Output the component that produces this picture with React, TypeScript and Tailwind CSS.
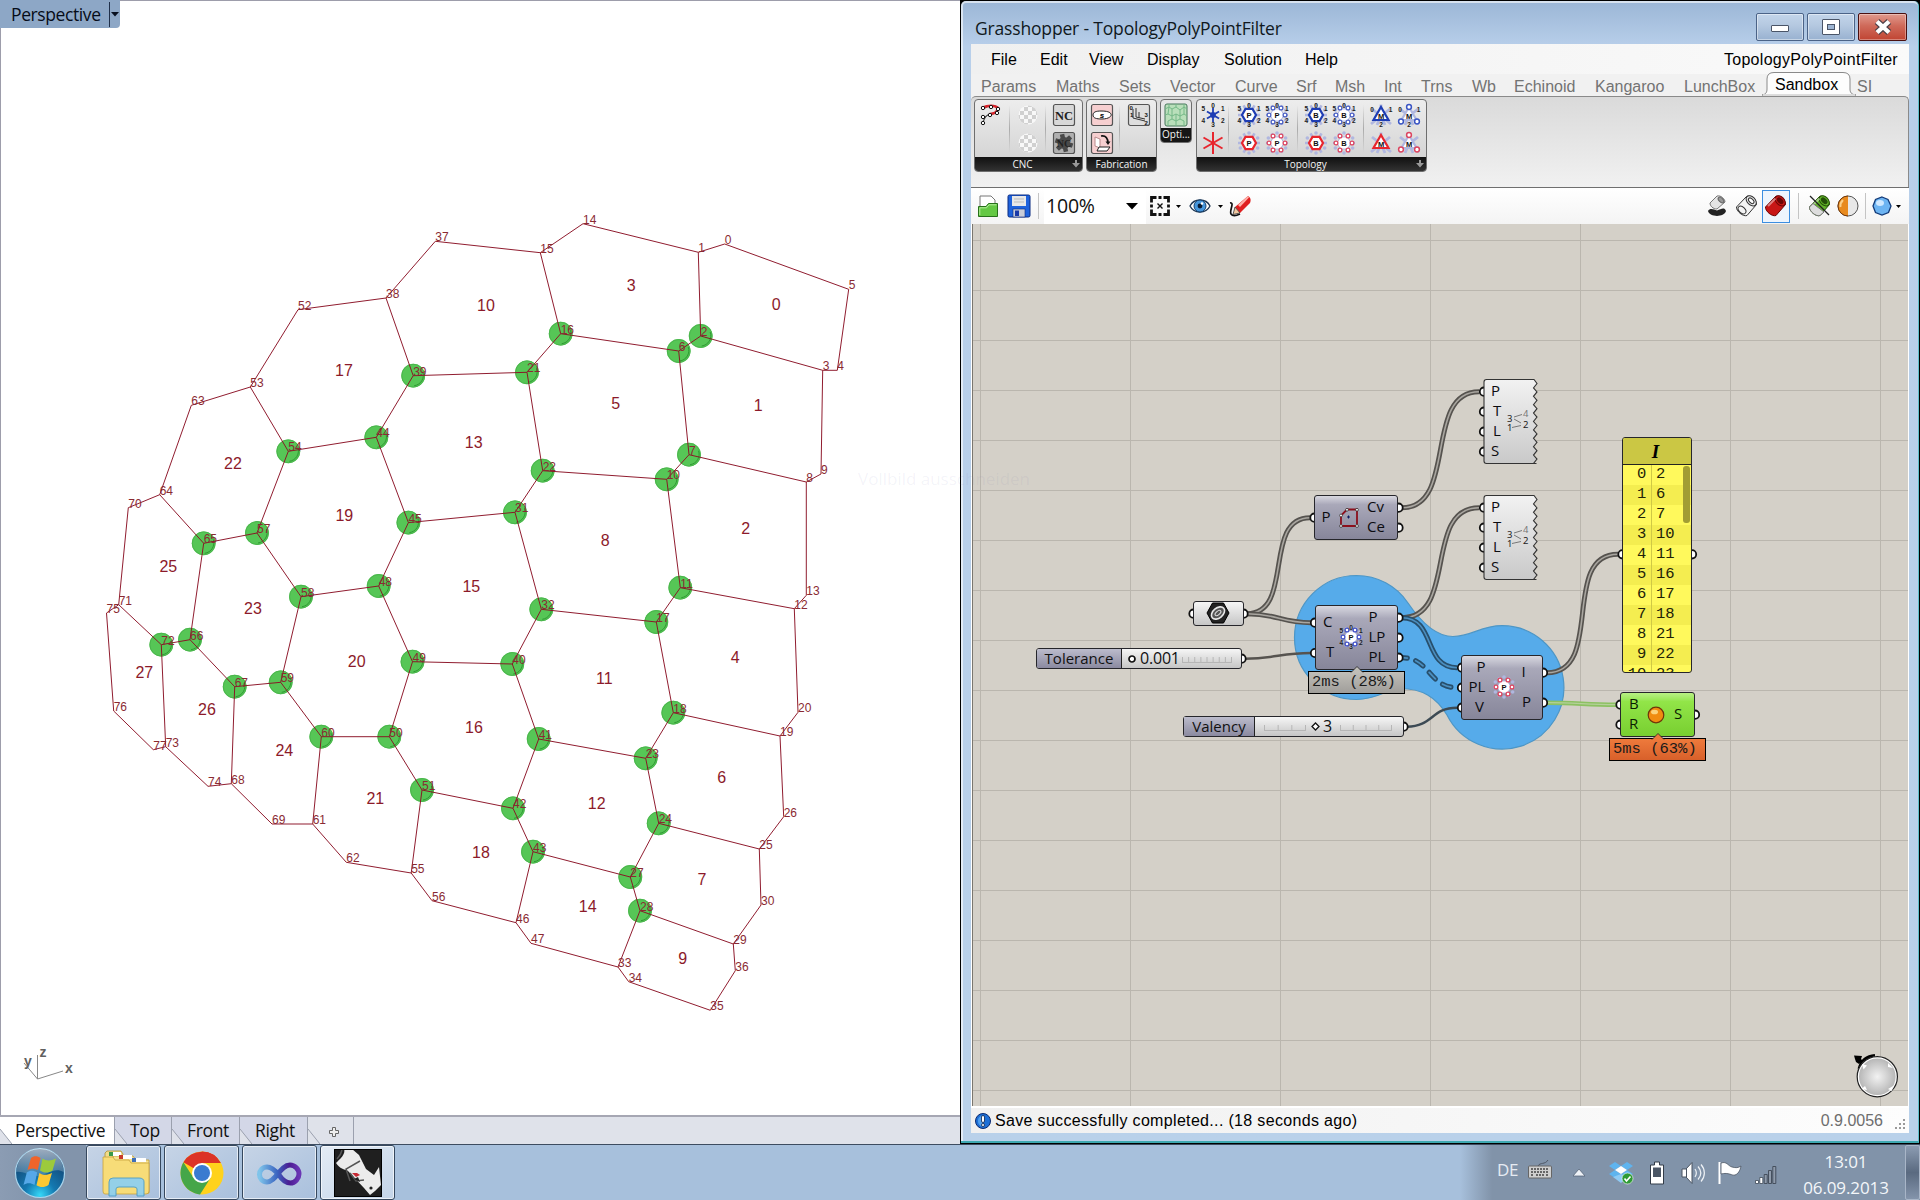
import React from "react";

/* ------------------------------------------------------------------ */
/* Mesh data                                                           */
/* ------------------------------------------------------------------ */

const V: Record<number, [number, number]> = {
  0: [724.7, 244], 1: [698.3, 252.3], 2: [700.7, 336], 3: [822.7, 370.3], 4: [837.3, 370.3], 5: [848.7, 289.3],
  6: [678.7, 351], 7: [689, 454.7], 8: [806.3, 482], 9: [821, 474], 10: [666.7, 479.3], 11: [680.3, 587.7],
  12: [794.3, 608.7], 13: [806.3, 595.3], 14: [583, 223.7], 15: [540.3, 252.7], 16: [560.7, 333.7], 17: [656.3, 622],
  18: [673.3, 712.7], 19: [780, 736], 20: [798, 712.3], 21: [527, 372.3], 22: [542.7, 470.7], 23: [645.7, 758.3],
  24: [658.7, 823.3], 25: [759.3, 849], 26: [783.7, 816.7], 27: [630.3, 877], 28: [640, 910.7], 29: [733.3, 944],
  30: [761, 905], 31: [515, 512.3], 32: [541.3, 609.3], 33: [618, 967], 34: [628.7, 981.7], 35: [710.3, 1010.3],
  36: [735.3, 970.7], 37: [435.3, 241.3], 38: [386, 298], 39: [413.2, 375.7], 40: [512.3, 664], 41: [538.7, 739],
  42: [513, 808.3], 43: [533, 851.7], 44: [376.3, 437.3], 45: [408.4, 522.6], 46: [516, 922.7], 47: [531, 943.3],
  48: [378.7, 586], 49: [412.5, 661.7], 50: [389.3, 736.7], 51: [422, 790], 52: [298, 309.7], 53: [250.3, 387],
  54: [288.3, 451.3], 55: [411.2, 873], 56: [432, 900.7], 57: [257, 533], 58: [301, 596.7], 59: [280.7, 682.3],
  60: [321.3, 736.7], 61: [312.7, 824], 62: [346.3, 862.3], 63: [191.3, 405.3], 64: [159.7, 494.7], 65: [203.7, 543.3],
  66: [190, 639.7], 67: [234.7, 686.7], 68: [231.3, 783.7], 69: [272, 824], 70: [128.3, 507.7], 71: [118.7, 604.7],
  72: [161.3, 644.7], 73: [165.7, 746.7], 74: [208, 786.3], 75: [106.5, 613], 76: [113.7, 711], 77: [153.3, 749.7],
};

const OUTLINE = [
  0, 1, 14, 15, 37, 38, 52, 53, 63, 64, 70, 71, 75, 76, 77, 73, 74, 68, 69, 61, 62, 55, 56, 46, 47, 33, 34, 35, 36, 29,
  30, 25, 26, 19, 20, 12, 13, 8, 9, 3, 4, 5, 0,
];

const INNER: [number, number][] = [
  [1, 2], [2, 3], [2, 6], [6, 16], [6, 7], [16, 15], [16, 21], [21, 39], [21, 22], [22, 10], [22, 31], [10, 7],
  [10, 11], [7, 8], [11, 12], [11, 17], [17, 32], [17, 18], [32, 31], [32, 40], [31, 45], [45, 44], [45, 48], [44, 39],
  [44, 54], [39, 38], [54, 53], [54, 57], [57, 65], [57, 58], [65, 64], [65, 66], [66, 72], [66, 67], [72, 71],
  [72, 73], [67, 68], [67, 59], [59, 58], [59, 60], [58, 48], [48, 49], [49, 40], [49, 50], [40, 41], [41, 23],
  [41, 42], [50, 60], [50, 51], [60, 61], [51, 42], [51, 55], [42, 43], [43, 27], [43, 46], [27, 24], [27, 28],
  [28, 33], [28, 29], [24, 23], [24, 25], [23, 18], [18, 19],
];

const SPHERES = [
  2, 6, 7, 10, 11, 16, 17, 18, 21, 22, 23, 24, 27, 28, 31, 32, 39, 40, 41, 42, 43, 44, 45, 48, 49, 50, 51, 54, 57, 58,
  59, 60, 65, 66, 67, 72,
];

const CELLS: [number, number, number][] = [
  [0, 776.3, 304.7], [1, 758.3, 405.3], [2, 745.7, 529], [3, 631.3, 285.7], [4, 735.3, 657.7], [5, 615.7, 404],
  [6, 721.7, 777.3], [7, 702, 879.7], [8, 605.3, 540.7], [9, 682.7, 958.7], [10, 486, 306], [11, 604.3, 678.7],
  [12, 596.7, 804], [13, 473.7, 442.3], [14, 587.7, 906.7], [15, 471.3, 586.7], [16, 474, 727.7], [17, 344, 370.3],
  [18, 481, 852.3], [19, 344.3, 515.3], [20, 356.7, 661.3], [21, 375.3, 798.3], [22, 233, 463.7], [23, 253, 608.3],
  [24, 284.3, 751], [25, 168.3, 567], [26, 207, 709.3], [27, 144.3, 672.7],
];

function Mesh() {
  return (
    <svg width="960" height="1115" viewBox="0 0 960 1115" className="block" fontFamily='"Liberation Sans", Arial, sans-serif'>
      {SPHERES.map((i) => (
        <g key={i}>
          <circle cx={V[i][0]} cy={V[i][1]} r="11.9" fill="#56c656" />
          <circle cx={V[i][0]} cy={V[i][1]} r="11.4" fill="none" stroke="#4ab54c" strokeWidth="1" />
          <path d={`M${V[i][0] + 9.5} ${V[i][1] - 4} A10.5 10.5 0 0 1 ${V[i][0] + 1} ${V[i][1] + 10}`} fill="none" stroke="#2f9a33" strokeWidth="1" />
        </g>
      ))}
      <g stroke="#8a1024" strokeWidth="0.95" fill="none">
        <polyline points={OUTLINE.map((i) => V[i].join(",")).join(" ")} />
        {INNER.map(([a, b]) => (
          <line key={`${a}-${b}`} x1={V[a][0]} y1={V[a][1]} x2={V[b][0]} y2={V[b][1]} />
        ))}
      </g>
      <g fontSize="12" fill="#8a2a32">
        {Object.entries(V).map(([k, [x, y]]) => (
          <text key={k} x={x} y={y}>{k}</text>
        ))}
      </g>
      <g fontSize="16" fill="#8c1a2a" textAnchor="middle">
        {CELLS.map(([n, x, y]) => (
          <text key={n} x={x} y={y + 5.3}>{n}</text>
        ))}
      </g>
      <g stroke="#888" strokeWidth="1" fill="none">
        <path d="M37.5 1079V1055M37.5 1079L63 1071M37.5 1079L24 1063" />
      </g>
      <g fontSize="14" fontWeight="bold" fill="#606060">
        <text x="39.5" y="1057">z</text>
        <text x="24" y="1066">y</text>
        <text x="65" y="1073">x</text>
      </g>
    </svg>
  );
}

function ViewTab({ label, w, active }: { label: string; w: string; active?: boolean }) {
  return (
    <div className={`relative flex h-full items-center border-r border-[#9ba0ae] ${w} ${active ? "bg-white" : "bg-[#d3d7e7]"}`}>
      <svg width="12" height="15" className="absolute bottom-0 left-0">
        <path d="M0 0L12 15H0Z" fill="#dfe2ea" />
        <path d="M0 0L12 15" stroke="#9ba0ae" />
      </svg>
      <span className="pl-[15px] pt-px text-[17.5px] leading-none tracking-[-0.35px] text-[#111]">{label}</span>
    </div>
  );
}

function RhinoViewport() {
  return (
    <div className="flex h-[1144px] w-[960px] flex-col">
      <div className="relative h-[1115px] border-l border-t border-[#9d9dab] bg-white">
        <div className="absolute -left-px -top-px">
          <Mesh />
        </div>
        <div className="absolute -left-px -top-px flex h-7 w-[120px] items-center rounded-br bg-[#8da7c6] font-['Open_Sans'] text-[17.5px] text-[#060c18]">
          <span className="w-[97px] pl-[11px] pt-px tracking-[-0.4px]">Perspective</span>
          <div className="ml-3 h-[25px] w-px bg-[#20304a]" />
          <svg width="9" height="5" className="ml-px"><path d="M0 0h8L4 4.5z" fill="#081020" /></svg>
        </div>
      </div>
      <div className="flex h-[29px] border-t-2 border-[#a6a7b3] bg-[#dfe2ea] font-['Open_Sans']">
        <ViewTab label="Perspective" w="w-[115px]" active />
        <ViewTab label="Top" w="w-[57px]" />
        <ViewTab label="Front" w="w-[68px]" />
        <ViewTab label="Right" w="w-[68px]" />
        <div className="relative flex w-[46px] items-center justify-center border-r border-[#9ba0ae]">
          <svg width="12" height="15" className="absolute bottom-0 left-0"><path d="M0 0L12 15" stroke="#9ba0ae" /></svg>
          <svg width="10" height="10" className="ml-1.5 mt-0.5"><path d="M3.5 .5h3v3h3v3h-3v3h-3v-3h-3v-3h3z" fill="#eee" stroke="#666" /></svg>
        </div>
      </div>
    </div>
  );
}

/* ------------------------------------------------------------------ */
/* Ribbon                                                              */
/* ------------------------------------------------------------------ */

const RIBBON_TABS: [string, string][] = [
  ["Params", "w-[75px]"], ["Maths", "w-[63px]"], ["Sets", "w-[51px]"], ["Vector", "w-[65px]"], ["Curve", "w-[61px]"],
  ["Srf", "w-[39px]"], ["Msh", "w-[49px]"], ["Int", "w-[37px]"], ["Trns", "w-[51px]"], ["Wb", "w-[42px]"],
  ["Echinoid", "w-[81px]"], ["Kangaroo", "w-[89px]"], ["LunchBox", "w-[91px]"],
];

const hexPts = (cx: number, cy: number, r: number, off = 0) =>
  Array.from({ length: 6 }, (_, i) => {
    const a = (Math.PI / 3) * i + off;
    return [cx + r * Math.cos(a), cy + r * Math.sin(a)] as [number, number];
  });

function TopoIcon({ kind, ch, color, nums }: { kind: "solid" | "dots" | "star" | "tri" | "tridots"; ch?: string; color: string; nums?: boolean }) {
  const o = Math.PI / 6;
  const tri = [[12, 4], [19.5, 17], [4.5, 17]];
  const soft = "#b0b7e0";
  return (
    <svg width="24" height="24" viewBox="0 0 24 24" className="m-[2px] block" fontFamily='"Liberation Sans", Arial, sans-serif'>
      {kind === "star" && (
        <g stroke={color} strokeWidth={nums ? 1.8 : 2}>
          {hexPts(12, 12, nums ? 7 : 11, o).map(([x, y], i) => <line key={i} x1="12" y1="12" x2={x} y2={y} />)}
          {nums && <circle cx="12" cy="12" r="2" fill={color} />}
        </g>
      )}
      {(kind === "solid" || kind === "dots") && (
        <g>
          {hexPts(12, 12, 11, 0).map(([x, y], i) => <line key={i} x1="12" y1="12" x2={x} y2={y} stroke={soft} strokeWidth="2.6" />)}
          {hexPts(12, 12, 10, o).map(([x, y], i) => <circle key={i} cx={x} cy={y} r="1.8" fill={soft} />)}
          <polygon points={hexPts(12, 12, 7, 0).map((p) => p.join(",")).join(" ")} fill="#fff" stroke={kind === "solid" ? color : soft} strokeWidth={kind === "solid" ? 2.2 : 1} />
          {kind === "dots" && hexPts(12, 12, 8, 0).map(([x, y], i) => <circle key={i} cx={x} cy={y} r="1.9" fill="#fff" stroke={color} strokeWidth="1.3" />)}
        </g>
      )}
      {(kind === "tri" || kind === "tridots") && (
        <g>
          {[[3, 6], [21, 6], [2, 21], [22, 21], [12, 1.5], [8, 22], [16, 22]].map(([x, y], i) => <line key={i} x1="12" y1="13" x2={x} y2={y} stroke={soft} strokeWidth="2.8" />)}
          <polygon points={tri.map((p) => p.join(",")).join(" ")} fill="#fff" stroke={kind === "tri" ? color : soft} strokeWidth="2.2" />
          {kind === "tridots" && [[12, 4], [20, 18.5], [4, 18.5]].map(([x, y], i) => <circle key={i} cx={x} cy={y} r="2.4" fill="#fff" stroke={color} strokeWidth="1.5" />)}
        </g>
      )}
      {ch && <text x="12" y={kind.startsWith("tri") ? 15.8 : 14.8} fontSize="7.5" fontWeight="bold" textAnchor="middle" fill="#111">{ch}</text>}
      {nums && (
        <g fontSize="6.5" fontWeight="bold" fill="#222" textAnchor="middle">
          {kind.startsWith("tri")
            ? [["0", 3, 9], ["1", 21.5, 9], ["2", 12, 24]].map(([t, x, y]) => <text key={t} x={x} y={y}>{t}</text>)
            : [["0", 12, 4.5], ["1", 21.8, 8], ["2", 21.8, 20], ["3", 12, 24], ["4", 2.2, 20], ["5", 2.2, 8]].map(([t, x, y]) => <text key={t} x={x} y={y}>{t}</text>)}
        </g>
      )}
    </svg>
  );
}

const BLUE = "#1e3db4";
const RED = "#e8262e";
const PINK = "#dc4560";

function Group({ label, w, plus, children }: { label: string; w: string; plus?: boolean; children: React.ReactNode }) {
  return (
    <div className={`flex h-[73px] shrink-0 flex-col overflow-hidden rounded-[4px] border border-[#6e6e6e] bg-linear-to-b from-[#ededed] to-[#cfcfcf] ${w}`}>
      <div className="flex flex-1 items-stretch pt-px">{children}</div>
      <div className={`relative flex h-[14px] items-center justify-center bg-linear-to-b from-[#111] to-[#333] pb-px font-['Open_Sans'] text-[10px] leading-none text-[#f4f4f4] ${plus ? "pr-3" : ""}`}>
        {label}
        {plus && <svg width="8" height="8" className="absolute right-[2px] top-[3px]"><path d="M3 0h2v3h3L4 7.5 0 3h3z" fill="#999" /></svg>}
      </div>
    </div>
  );
}

function Col({ w, sep, children }: { w: string; sep?: boolean; children: React.ReactNode }) {
  return (
    <div className={`flex ${w}`}>
      {sep && <div className="my-1 w-px bg-linear-to-b from-transparent via-[#aaa] to-transparent" />}
      <div className="flex flex-1 flex-wrap content-start justify-center">{children}</div>
    </div>
  );
}

function Tile({ bg, children }: { bg: string; children: React.ReactNode }) {
  return (
    <svg width="24" height="24" viewBox="0 0 24 24" className="m-[2px] block">
      <rect x="1.5" y="1.5" width="21" height="21" rx="2" fill={bg} stroke="#555" strokeWidth="1.2" />
      {children}
    </svg>
  );
}

function Checker() {
  return (
    <svg width="24" height="24" viewBox="0 0 24 24" className="m-[2px] block">
      <defs>
        <clipPath id="disc"><circle cx="12" cy="12" r="9.5" /></clipPath>
      </defs>
      <g clipPath="url(#disc)">
        <rect width="24" height="24" fill="#f8f8f8" />
        {Array.from({ length: 36 }, (_, i) => [i % 6, Math.floor(i / 6)])
          .filter(([a, b]) => (a + b) % 2)
          .map(([a, b]) => <rect key={`${a}-${b}`} x={a * 4} y={b * 4} width="4" height="4" fill="#d0d0d0" />)}
      </g>
    </svg>
  );
}

function CurveIcon() {
  return (
    <svg width="24" height="24" viewBox="0 0 24 24" className="m-[2px] mr-[5px] block">
      <path d="M5 6C10 2 18 2 20 5C20 10 16 11 12 11C8 12 6 15 5 20" fill="none" stroke="#333" strokeWidth="1.2" />
      <path d="M4 5C10 2 17 2 20 5C19 10 16 10 12 11" fill="none" stroke="#d8232a" strokeWidth="2.6" />
      {[[5, 5], [13, 4], [20, 6], [12, 12], [19, 10], [5, 14], [5, 20]].map(([x, y], i) => <circle key={i} cx={x} cy={y} r="1.7" fill="#fff" stroke="#111" />)}
    </svg>
  );
}

function Ribbon() {
  return (
    <div className="h-[91px] rounded-t-[5px] border-t border-r border-[#8a8a8a] bg-linear-to-b from-[#dadada] to-[#f1f1f1]">
      <div className="flex items-start pl-[3px] pt-[2px]">
        <Group label="CNC" w="w-[109px]" plus>
          <Col w="w-[34px]"><CurveIcon /></Col>
          <Col w="w-[37px]" sep><Checker /><Checker /></Col>
          <Col w="w-[37px]" sep>
            <Tile bg="#d8d8d8"><text x="12" y="16.5" fontSize="12.5" textAnchor="middle" fontFamily='"Liberation Serif", serif' fontWeight="bold" fill="#222">NC</text></Tile>
            <Tile bg="#b0b0b0">
              <g stroke="#4a4a4a" strokeWidth="4.5">{hexPts(12, 12, 9, 0.3).map(([x, y], i) => <line key={i} x1="12" y1="12" x2={x} y2={y} />)}</g>
              <circle cx="12" cy="12" r="6" fill="#4a4a4a" />
              <text x="12" y="16" fontSize="10" textAnchor="middle" fontFamily='"Liberation Serif", serif' fontWeight="bold" fill="#222">NC</text>
            </Tile>
          </Col>
        </Group>
        <div className="w-[3px]" />
        <Group label="Fabrication" w="w-[71px]">
          <Col w="w-[30px]">
            <Tile bg="#f6cfd0">
              <path d="M3 12C3 9 6 8 11 8C17 8 20 9 21 11C22 13 19 16 12 16C6 16 3 15 3 12Z" fill="#fff" stroke="#222" />
              <text x="12" y="14.5" fontSize="8" fontStyle="italic" fontWeight="bold" textAnchor="middle">s</text>
            </Tile>
            <Tile bg="#f6cfd0">
              <path d="M5 6l5 2v9l-5-2z" fill="#fff" stroke="#b98a8c" />
              <path d="M9 16h11l-3 4H7z" fill="#fff" stroke="#222" />
              <path d="M11 5C16 4 18 8 18 12" fill="none" stroke="#111" strokeWidth="1.6" />
              <path d="M15.5 10.5l5 0-2.5 3.5z" fill="#111" />
            </Tile>
          </Col>
          <Col w="w-[39px] pl-[2px]" sep>
            <div className="pl-[2px]">
              <Tile bg="#dedede">
                <path d="M6 6v9l12 3M9 5v9M12 9v6M9 14l9 2" fill="none" stroke="#333" />
                <g fontSize="6" fontWeight="bold" fill="#111" fontFamily='"Liberation Sans", sans-serif'>
                  <text x="2.5" y="7">0</text><text x="3" y="14">1</text><text x="17.5" y="22">2</text><text x="17.5" y="14">3</text>
                </g>
              </Tile>
            </div>
          </Col>
        </Group>
        <div className="w-[3px]" />
        <div className="flex h-11 w-8 shrink-0 flex-col overflow-hidden rounded-[4px] border border-[#6e6e6e] bg-[#e6e6e6]">
          <div className="flex flex-1 justify-center">
            <svg width="24" height="24" viewBox="0 0 24 24" className="mt-[3px] block">
              <rect x="1" y="1" width="22" height="22" rx="2" fill="#b9dfba" stroke="#47775a" />
              <path d="M1 6l4-2 3 2 4-2 4 3 4-3 3 2M5 4V1M12 4V1M20 4V1M1 12l3-1 4 2 4-2 4 2 4-2 3 2M8 6v7M16 7v6M4 11l1-7M20 11V4M4 18l4-2 4 2 4-2 4 2M8 13v3M16 13v3M12 18v5M4 18v5M20 18v5M12 11v7" fill="none" stroke="#74b887" strokeWidth="1" />
            </svg>
          </div>
          <div className="h-[14px] bg-[#161616] text-center font-['Open_Sans'] text-[10px] leading-[12px] text-[#f4f4f4]">Opti...</div>
        </div>
        <div className="w-[4px]" />
        <Group label="Topology" w="w-[231px]" plus>
          <Col w="w-[31px]"><TopoIcon kind="star" color={BLUE} nums /><TopoIcon kind="star" color={RED} /></Col>
          <Col w="w-[69px]" sep>
            <TopoIcon kind="solid" ch="P" color={BLUE} nums /><TopoIcon kind="dots" ch="P" color="#4a5fc4" nums />
            <TopoIcon kind="solid" ch="P" color={RED} /><TopoIcon kind="dots" ch="P" color={PINK} />
          </Col>
          <Col w="w-[65px]" sep>
            <TopoIcon kind="solid" ch="B" color={BLUE} nums /><TopoIcon kind="dots" ch="B" color="#4a5fc4" nums />
            <TopoIcon kind="solid" ch="B" color={RED} /><TopoIcon kind="dots" ch="B" color={PINK} />
          </Col>
          <Col w="w-[64px] pl-px" sep>
            <TopoIcon kind="tri" ch="M" color={BLUE} nums /><TopoIcon kind="tridots" ch="M" color="#3a55c4" nums />
            <TopoIcon kind="tri" ch="M" color={RED} /><TopoIcon kind="tridots" ch="M" color={PINK} />
          </Col>
        </Group>
      </div>
    </div>
  );
}

/* ------------------------------------------------------------------ */
/* Canvas toolbar                                                      */
/* ------------------------------------------------------------------ */

function Caret({ big }: { big?: boolean }) {
  return big ? (
    <svg width="12" height="7"><path d="M0 0h12L6 6.5z" fill="#000" /></svg>
  ) : (
    <svg width="5" height="3"><path d="M0 0h5L2.5 3z" fill="#000" /></svg>
  );
}

function Cyl({ body, dark, wire }: { body: string; dark: string; wire?: boolean }) {
  return (
    <g stroke={wire ? "#333" : dark} strokeWidth="1">
      <path d="M1.500 13L11.500 2.500C15 .5 22 6.500 21.500 10.500L12 21.500C8 23 1 17 1.500 13Z" fill={body} />
      <ellipse cx="16.2" cy="6.8" rx="4" ry="6" transform="rotate(-45 16.2 6.8)" fill={wire ? "#eee" : body} />
      <ellipse cx="16.2" cy="6.8" rx="2" ry="3.4" transform="rotate(-45 16.2 6.8)" fill={wire ? "#fff" : dark} />
      {wire && <ellipse cx="7" cy="16" rx="3" ry="4.6" transform="rotate(-45 7 16)" fill="none" />}
      {!wire && <path d="M4 12L11.500 4.500" stroke="#fff" strokeOpacity=".45" strokeWidth="2" />}
    </g>
  );
}

function CanvasToolbar() {
  return (
    <div className="flex h-[37px] items-center border-t border-[#6f6f6f] bg-linear-to-b from-white to-[#f4f4f4]">
      <svg width="22" height="24" viewBox="0 0 22 24" className="ml-[6px]">
        <path d="M3 2h11l4 4v8H3z" fill="#fff" stroke="#777" />
        <path d="M1.500 22.500V12.500H9L11.500 9.500H20.500V22.500z" fill="#64c844" stroke="#27701a" />
        <path d="M2.800 21V13.800H9.500L12 10.800H19.500" fill="none" stroke="#b4ee9c" />
      </svg>
      <svg width="24" height="24" viewBox="0 0 24 24" className="ml-[8px]">
        <rect x="1" y="1" width="22" height="22" rx="1.5" fill="#1e62dc" stroke="#0b2b80" />
        <rect x="5" y="2" width="14" height="10" fill="#e8e8e8" />
        <path d="M7 5h10M7 8h10" stroke="#bbb" />
        <rect x="6" y="15" width="12" height="8" fill="#c8ccd8" stroke="#0b2b80" strokeWidth=".6" />
        <rect x="8" y="16.5" width="4" height="5.5" fill="#1a3aa8" />
      </svg>
      <div className="ml-[7px] h-[26px] w-px bg-[#c4c4c4]" />
      <div className="ml-[5px] flex h-[35px] w-[102px] items-center justify-between bg-white pl-[2px] pr-[8px] font-['Open_Sans'] text-[19.5px] tracking-[-0.2px] text-[#111]">
        100% <Caret big />
      </div>
      <svg width="20" height="20" viewBox="0 0 20 20" className="ml-[4px]">
        <path d="M1.500 6.500V1.500H6.500M13.500 1.500h5v5M18.500 13.500v5h-5M6.500 18.500H1.500v-5M8.500 1.500h3M8.500 18.500h3M1.500 8.500v3M18.500 8.500v3" fill="none" stroke="#111" strokeWidth="2.800" />
        <path d="M7.500 7.500l5 5M12.500 7.500l-5 5" stroke="#111" strokeWidth="1.4" />
      </svg>
      <div className="ml-[6px]"><Caret /></div>
      <svg width="22" height="18" viewBox="0 0 22 18" className="ml-[8px]">
        <path d="M1 9C5 1 17 1 21 9C17 17 5 17 1 9Z" fill="#fff" stroke="#1d3550" strokeWidth="1.3" />
        <circle cx="11" cy="9" r="6" fill="#4596dc" stroke="#14406e" />
        <circle cx="11" cy="9" r="2.4" fill="#071a33" />
        <circle cx="13" cy="6.500" r="1.3" fill="#fff" />
      </svg>
      <div className="ml-[7px]"><Caret /></div>
      <svg width="24" height="24" viewBox="0 0 24 24" className="ml-[5px]">
        <path d="M2 9C7 8 1 17 3 20C5 23 10 21 12 20" fill="none" stroke="#111" strokeWidth="1.7" />
        <path d="M7 13L20 2C23 4 23 6 22 9L12 19Z" fill="#e02020" />
        <path d="M10 11L20 2l1 1.500L12 13z" fill="#ffb0a8" />
        <path d="M7 13l5 6-7 1.500z" fill="#f2c9a0" stroke="#333" strokeWidth=".8" />
      </svg>
      <div className="flex-1" />
      <svg width="24" height="24" viewBox="0 0 24 24" className="mr-[1px]">
        <path d="M5 9L12 2C16 1 20 5 20 8L12 15C8 15 5 12 5 9Z" fill="#e4e4e4" stroke="#777" />
        <ellipse cx="16" cy="6" rx="2" ry="3.500" transform="rotate(-45 16 6)" fill="#999" stroke="#666" />
        <path d="M3 17C5 13.500 9 15.500 12 16.500C16 15.500 19 12.500 21 17C19 23.500 5 23.500 3 17Z" fill="#222" />
      </svg>
      <svg width="24" height="24" viewBox="0 0 24 24" className="ml-[5px]"><Cyl body="#f4f4f4" dark="#333" wire /></svg>
      <div className="ml-[3px] flex h-[33px] w-[28px] items-center justify-center border border-[#3c8ee0] bg-[#eef5fd]">
        <svg width="24" height="24" viewBox="0 0 24 24"><Cyl body="#c81616" dark="#6a0505" /></svg>
      </div>
      <div className="ml-[8px] h-[26px] w-px bg-[#c4c4c4]" />
      <svg width="24" height="24" viewBox="0 0 24 24" className="ml-[9px]">
        <Cyl body="#62b428" dark="#245008" />
        <path d="M1.500 13L5 9.500L16 18L12 21.500C8 23 1 17 1.500 13Z" fill="#ddd" stroke="#777" />
        <path d="M2 2L21 21" stroke="#222" strokeWidth="1.3" />
      </svg>
      <svg width="22" height="22" viewBox="0 0 22 22" className="ml-[5px]">
        <circle cx="11" cy="11" r="10" fill="#e8e8e8" stroke="#555" />
        <path d="M11 1A10 10 0 0 0 11 21Z" fill="#e88a1e" />
        <path d="M6 5C4 7 3 9 3.500 12" stroke="#fbd08a" strokeWidth="2" fill="none" />
        <path d="M11 1A10 10 0 0 0 11 21" stroke="#7a3a05" fill="none" />
      </svg>
      <div className="ml-[6px] h-[26px] w-px bg-[#c4c4c4]" />
      <svg width="20" height="20" viewBox="0 0 20 20" className="ml-[6px]">
        <path d="M10 1l6 2.500L19 10l-2.500 6.500L10 19l-6.500-2.500L1 10l2.500-6.500z" fill="#6db4f2" stroke="#123a78" strokeWidth="1.3" />
        <ellipse cx="8" cy="7" rx="4" ry="3" fill="#cfe8ff" />
      </svg>
      <div className="ml-[4px] mr-[8px]"><Caret /></div>
    </div>
  );
}

/* ------------------------------------------------------------------ */
/* Node canvas (coordinates are desktop coordinates)                   */
/* ------------------------------------------------------------------ */

type Pt = [number, number];
const bez = ([x1, y1]: Pt, [x2, y2]: Pt, k: number) => `M${x1} ${y1}C${x1 + k} ${y1} ${x2 - k} ${y2} ${x2} ${y2}`;

function Wire({ a, b, k, inner = "#a9a6a0", outer = "#56534f", w = 5 }: { a: Pt; b: Pt; k: number; inner?: string; outer?: string; w?: number }) {
  return (
    <g fill="none">
      <path d={bez(a, b, k)} stroke={outer} strokeWidth={w} />
      <path d={bez(a, b, k)} stroke={inner} strokeWidth={w - 3.4} />
    </g>
  );
}

const GRIPS: Pt[] = [
  [1484, 391.7], [1484, 411.7], [1484, 431.7], [1484, 451.7],
  [1484, 507.7], [1484, 527.7], [1484, 547.7], [1484, 567.7],
  [1314.5, 517.7], [1398.5, 507.7], [1398.5, 527.7],
  [1315, 622.7], [1315, 653], [1398.5, 617.7], [1398.5, 637.7], [1398.5, 657.7],
  [1462, 667.7], [1462, 687.7], [1462, 707.7], [1543, 672.7], [1543, 702.7],
  [1193.5, 613.7], [1243.5, 613.7], [1241.5, 658.7], [1403.5, 726.7],
  [1622.5, 554.3], [1692, 554.3], [1620.5, 704.7], [1620.5, 724.7], [1695, 714.7],
];

const CANVAS_X = [980.5, 1130.5, 1280.5, 1430.5, 1580.5, 1730.5, 1880.5];
const CANVAS_Y = Array.from({ length: 18 }, (_, i) => 240.5 + i * 50);

const jag = (y: number) => {
  let d = `M1486.5 ${y}H1534`;
  for (let i = 0; i < 10; i++) d += `L1537 ${y + 4 + i * 8.4}L1533.5 ${y + 8.4 + i * 8.4}`;
  return `${d}L1536.5 ${y + 84}H1486.5Q1484 ${y + 84} 1484 ${y + 81.5}V${y + 2.5}Q1484 ${y} 1486.5 ${y}Z`;
};

function CanvasDrawing() {
  return (
    <svg width="1920" height="1200" viewBox="0 0 1920 1200" className="absolute left-0 top-0">
      <defs>
        <linearGradient id="lg" x1="0" y1="0" x2="0" y2="1"><stop offset="0" stopColor="#f2f2f2" /><stop offset="1" stopColor="#c9c9c9" /></linearGradient>
      </defs>
      <g stroke="#bab6ae" strokeWidth="1">
        {CANVAS_X.map((x) => <line key={x} x1={x} x2={x} y1="224" y2="1106" />)}
        {CANVAS_Y.map((y) => <line key={y} x1="972" x2="1908" y1={y} y2={y} />)}
      </g>
      <path
        d="M1356.5 575.5A62 62 0 0 1 1408 603C1425 628 1440 636.5 1453 636.5C1472 636.5 1480 625.7 1502 625.7A61.7 61.7 0 1 1 1447 715C1436 697 1422 688.5 1400 688.5C1388 688.5 1378 699.5 1356.5 699.5A62 62 0 0 1 1356.5 575.5Z"
        fill="#56abea" stroke="#4d96c6" strokeWidth="1.2"
      />
      <Wire a={[1402, 507.7]} b={[1479, 391.7]} k={56} />
      <Wire a={[1247, 613.7]} b={[1310, 517.7]} k={48} />
      <Wire a={[1247, 613.7]} b={[1311, 622.7]} k={30} />
      <Wire a={[1402, 617.7]} b={[1479, 507.7]} k={56} />
      <Wire a={[1402, 617.7]} b={[1457, 667.7]} k={34} outer="#284f6c" inner="#4b8fc0" />
      <Wire a={[1547, 672.7]} b={[1618, 554.3]} k={58} />
      <Wire a={[1547, 702.7]} b={[1616, 704.7]} k={30} outer="#8cc162" inner="#b5d09a" w={4.6} />
      <g fill="none" strokeLinecap="round">
        <path d={bez([1402, 657.7], [1457, 687.7], 28)} stroke="#284f6c" strokeWidth="5.2" strokeDasharray="9 9" strokeDashoffset="4" />
        <path d={bez([1402, 657.7], [1457, 687.7], 28)} stroke="#4b8fc0" strokeWidth="1.8" strokeDasharray="9 9" strokeDashoffset="4" />
      </g>
      <path d={bez([1245, 658.7], [1311, 653], 30)} fill="none" stroke="#56534f" strokeWidth="2.5" />
      <path d={bez([1407, 726.7], [1457, 707.7], 26)} fill="none" stroke="#3c4a54" strokeWidth="2.5" />
      {GRIPS.map(([x, y], i) => <circle key={i} cx={x} cy={y} r="4.2" fill="#fff" stroke="#111" strokeWidth="1.8" />)}
      {[379.5, 495.5].map((y) => (
        <g key={y}>
          <path d={jag(y)} fill="url(#lg)" stroke="#333" strokeWidth="1.1" />
          <g fontFamily='"Noto Sans", sans-serif' fontSize="9.5" fill="#222">
            <text x="1507" y={y + 42}>3</text><text x="1523" y={y + 37} fill="#777">4</text>
            <text x="1507" y={y + 51}>1</text><text x="1523" y={y + 48.5}>2</text>
          </g>
          <path d={`M1514 ${y + 37.500}l8 -2.500M1514 ${y + 39.500}l7 4M1512 ${y + 48}l9 -2`} stroke="#777" fill="none" />
        </g>
      ))}
    </svg>
  );
}

const LABELS: [string, number, number][] = [
  ["P", 1491, 390.7], ["T", 1493, 411], ["L", 1493, 431], ["S", 1491, 451],
  ["P", 1491, 506.7], ["T", 1493, 527], ["L", 1493, 547], ["S", 1491, 567],
  ["P", 1321.5, 516.7], ["Cv", 1367, 507], ["Ce", 1367, 527],
  ["C", 1323, 622], ["T", 1326, 652], ["P", 1368.5, 617], ["LP", 1368.5, 637], ["PL", 1368.5, 657],
  ["P", 1476.5, 667], ["PL", 1468.5, 687], ["V", 1475, 707], ["I", 1521.5, 672], ["P", 1522, 702],
];

function Box({ x, y, w, h, cls, children }: { x: number; y: number; w: number; h: number; cls: string; children?: React.ReactNode }) {
  return (
    <div className={`absolute rounded-[3px] border border-[#26262b] ${cls}`} style={{ left: x, top: y, width: w, height: h }}>
      {children}
    </div>
  );
}

const PURPLE = "bg-linear-to-b from-[#d8d8e0] from-0% via-[#a9a8b9] via-20% to-[#87869a]";
const SILVER = "bg-linear-to-b from-[#f6f6f6] to-[#c6c6c6]";

function Ruler({ w, n }: { w: number; n: number }) {
  return (
    <svg width={w} height="8" className="block">
      <path d={`M0 7.500H${w}` + Array.from({ length: n + 1 }, (_, i) => `M${0.5 + (i * (w - 1)) / n} 2V7`).join("")} stroke="#b6b6b6" fill="none" />
    </svg>
  );
}

function ClusterIcon({ x, y, color, nums }: { x: number; y: number; color: string; nums?: boolean }) {
  return (
    <div className="absolute" style={{ left: x - 14, top: y - 14 }}>
      <TopoIcon kind="dots" ch="P" color={color} nums={nums} />
    </div>
  );
}

function TimeTag({ x, y, w, cls, arrow, children }: { x: number; y: number; w: number; cls: string; arrow: string; children: string }) {
  return (
    <div className={`absolute flex h-[23px] items-center border-[1.5px] border-black pl-[3px] font-['Liberation_Mono'] text-[15.5px] whitespace-pre text-[#1a1a1a] ${cls}`} style={{ left: x, top: y, width: w }}>
      <svg width="14" height="7" className="absolute -top-[6px] left-[41px]"><path d="M1 6.500L7 .5L13 6.500" fill={arrow} stroke="#222" strokeWidth=".8" /></svg>
      {children}
    </div>
  );
}

const PANEL_ROWS = [2, 6, 7, 10, 11, 16, 17, 18, 21, 22, 23];

function NodeCanvas() {
  return (
    <div className="relative h-[882px] w-[936px] overflow-hidden border-l border-[#7a766e] bg-[#d4d0c8]">
      <div className="absolute -left-[973px] -top-[224px] h-[1200px] w-[1920px] font-['Open_Sans']">
        <CanvasDrawing />

        <Box x={1193} y={601} w={51} h={25} cls={SILVER}>
          <svg width="24" height="24" viewBox="0 0 24 24" className="ml-[12px] -mt-px block">
            <path d="M6.500 2h11L23 12l-5.500 10h-11L1 12z" fill="#222" stroke="#000" />
            <ellipse cx="12" cy="12" rx="7.500" ry="5" transform="rotate(-40 12 12)" fill="#555" stroke="#e8e8e8" strokeWidth="1.600" />
            <ellipse cx="12" cy="12" rx="3.500" ry="1.800" transform="rotate(-40 12 12)" fill="none" stroke="#ddd" />
          </svg>
        </Box>
        <Box x={1314} y={495} w={84} h={45} cls={PURPLE}>
          <svg width="20" height="20" viewBox="0 0 20 20" className="absolute left-[24px] top-[12px]">
            <path d="M2 18V7.500L8 1.500H18V18Z" fill="none" stroke="#8c0f1c" strokeWidth="1.800" />
            {[[2, 18], [2, 7.5], [8, 1.8], [18, 1.8], [18, 18]].map(([a, b], i) => <circle key={i} cx={a} cy={b} r="1.400" fill="#fff" stroke="#222" strokeWidth=".7" />)}
            <path d="M9.500 7.500v3M8 9h3" stroke="#0d1a60" />
          </svg>
        </Box>
        <Box x={1315} y={605} w={83} h={65} cls={PURPLE} />
        <Box x={1461} y={655} w={82} h={65} cls={PURPLE} />
        <ClusterIcon x={1351} y={637} color="#4453c8" nums />
        <ClusterIcon x={1504} y={687} color={PINK} />

        <Box x={1036} y={648} w={206} h={21} cls={`flex items-center overflow-hidden ${SILVER}`}>
          <div className="flex h-full w-[85px] items-center justify-center border-r border-[#222] bg-linear-to-b from-[#bcbccc] to-[#8b8aa0] pb-px text-[15px] text-[#111]">Tolerance</div>
          <svg width="8" height="8" className="ml-[6px]"><circle cx="4" cy="4" r="3" fill="#fff" stroke="#111" strokeWidth="1.700" /></svg>
          <span className="ml-[4px] w-[42px] pb-px text-[16px] leading-none tracking-[-0.2px] text-[#111]">0.001</span>
          <Ruler w={50} n={8} />
        </Box>
        <Box x={1183} y={716} w={221} h={21} cls={`flex items-center ${SILVER}`}>
          <div className="flex h-full w-[71px] items-center justify-center border-r border-[#222] bg-linear-to-b from-[#bcbccc] to-[#8b8aa0] pb-px text-[15px] text-[#111]">Valency</div>
          <div className="ml-[9px]"><Ruler w={42} n={3} /></div>
          <svg width="9" height="9" className="ml-[5px]"><path d="M4.500 1L8 4.500L4.500 8L1 4.500Z" fill="#fff" stroke="#111" strokeWidth="1.300" /></svg>
          <span className="ml-[3px] w-[17px] pb-px text-[16px] leading-none text-[#111]">3</span>
          <Ruler w={52} n={4} />
        </Box>

        {LABELS.map(([t, x, y], i) => (
          <span key={i} className="absolute text-[15px] leading-5 text-[#0c0c10]" style={{ left: x, top: y - 11 }}>{t}</span>
        ))}

        <TimeTag x={1308} y={671} w={97} cls="bg-linear-to-b from-[#c0beb8] to-[#a09e9a]" arrow="#c0beb8">2ms (28%)</TimeTag>

        <Box x={1622} y={437} w={70} h={236} cls="flex flex-col overflow-hidden bg-[#fff95c]">
          <div className="flex h-[27px] shrink-0 items-center justify-center border-b-[1.5px] border-[#222] bg-[#cbc744] pr-[3px] font-['Liberation_Serif'] text-[19px] font-bold italic leading-none text-black">I</div>
          <div className="relative flex-1 overflow-hidden">
            {PANEL_ROWS.map((v, i) => (
              <div key={i} className={`flex h-5 items-center font-['Liberation_Mono'] text-[15.5px] leading-none text-[#222208] ${i % 2 ? "bg-[#f4ed50]" : ""}`}>
                <span className="flex h-full w-[29px] items-center justify-end border-r border-[#cfc945] pr-[5px] tracking-[-0.2px]">{i}</span>
                <span className="pl-[4px]">{v}</span>
              </div>
            ))}
            <div className="absolute right-px top-px h-[57px] w-[7px] rounded-[3px] bg-[#a29d34]" />
          </div>
        </Box>

        <Box x={1620} y={692} w={75} h={45} cls="bg-linear-to-b from-[#b8f084] from-0% via-[#92e548] via-20% to-[#78cf30]">
          <div className="flex h-full items-center text-[15px] leading-5 text-[#0b1c02]">
            <div className="-mt-[3px] ml-[8px] flex w-[17px] flex-col"><span>B</span><span>R</span></div>
            <svg width="18" height="18" viewBox="0 0 18 18" className="ml-px">
              <circle cx="9" cy="9" r="7.800" fill="#f08c10" stroke="#70340a" strokeWidth="1.200" />
              <ellipse cx="7.500" cy="6" rx="3.500" ry="2.300" fill="#fbd27a" />
            </svg>
            <span className="-mt-[3px] ml-[9px]">S</span>
          </div>
        </Box>
        <TimeTag x={1609} y={738} w={97} cls="bg-linear-to-b from-[#ee7a3c] to-[#d8602a]" arrow="#ee7a3c">5ms (63%)</TimeTag>

        <svg width="60" height="60" viewBox="0 0 60 60" className="absolute left-[1847px] top-[1047px]">
          <defs><radialGradient id="nav"><stop offset="0" stopColor="#f2f2f2" /><stop offset="1" stopColor="#b4b4b4" /></radialGradient></defs>
          <path d="M12.500 22C15 13 20 9.500 28 9" fill="none" stroke="#000" strokeWidth="4" />
          <path d="M7 8.500l8 .5-1 3 2 2-4 3-3-2-1-3z" fill="#000" />
          <circle cx="30.300" cy="29.700" r="19.300" fill="url(#nav)" stroke="#fff" strokeWidth="2" />
          <circle cx="30.300" cy="29.700" r="20.100" fill="none" stroke="#222" strokeWidth="1.200" />
          <path d="M15 17l5 1.500-3.500 4zM41 16l5 5-5-1zM14.500 42l5.500 1-2-4zM46 39l-1 5-4-2z" fill="#fff" />
        </svg>
      </div>
    </div>
  );
}

/* ------------------------------------------------------------------ */
/* Grasshopper window                                                  */
/* ------------------------------------------------------------------ */

function TitleBar() {
  const btn = "flex h-[28px] items-center justify-center rounded-[2px] border border-[#4b6387] bg-linear-to-b from-[#c3d5ea] from-0% via-[#b4c8e0] via-45% to-[#98b1d0] shadow-[inset_0_0_0_1px_rgba(255,255,255,.45)]";
  return (
    <div className="flex h-[41px] items-start justify-between">
      <span className="pl-[4px] pt-[13px] font-['Open_Sans'] text-[17.5px] leading-[24px] tracking-[-0.17px] text-[#101820]">Grasshopper - TopologyPolyPointFilter</span>
      <div className="mr-[3px] mt-[10px] flex gap-[3px]">
        <div className={`${btn} w-[48px]`}><div className="mt-[3px] h-[7px] w-[18px] rounded-[1px] border border-[#4a5568] bg-white" /></div>
        <div className={`${btn} w-[48px]`}><div className="h-[16px] w-[18px] rounded-[1px] border border-[#4a5568] bg-white p-[4px]"><div className="h-full w-full border border-[#4a5568] bg-[#9db4d2]" /></div></div>
        <div className="flex h-[28px] w-[49px] items-center justify-center rounded-[2px] border border-[#4a1010] bg-linear-to-b from-[#e09a8e] from-0% via-[#cf6a5a] via-45% to-[#c04432] shadow-[inset_0_0_0_1px_rgba(255,255,255,.35)]">
          <svg width="20" height="18" viewBox="0 0 20 18"><path d="M4 3.500L16 14.500M16 3.500L4 14.500" stroke="#4b4048" strokeWidth="6.500" /><path d="M4 3.500L16 14.500M16 3.500L4 14.500" stroke="#fff" strokeWidth="4.400" /></svg>
        </div>
      </div>
    </div>
  );
}

function GrasshopperWindow() {
  const menu: [string, string][] = [["File", "w-[49px]"], ["Edit", "w-[49px]"], ["View", "w-[58px]"], ["Display", "w-[77px]"], ["Solution", "w-[81px]"], ["Help", "w-[60px]"]];
  return (
    <div className="h-[1144px] w-[960px] bg-black pl-px pt-px">
      <div className="h-[1142px] w-[958px] rounded-t-[5px] border-b-2 border-r border-b-[#3fa9b2] border-r-[#5fc0cc] bg-linear-to-b from-[#9bb6d6] from-0% via-[#b8cfea] via-4% to-[#b9d1ea]">
        <div className="h-full rounded-t-[5px] border-l-2 border-t-2 border-white/60 px-[8px]">
          <TitleBar />
          <div className="flex h-[1089px] w-[938px] flex-col bg-[#f1f1f1] font-['Liberation_Sans']">
            <div className="flex h-[30px] items-center bg-linear-to-r from-[#f0f0f0] to-[#fafafa] pl-[20px] pr-[11px] pt-[2px] text-[16px] text-black">
              {menu.map(([m, w]) => <span key={m} className={w}>{m}</span>)}
              <span className="ml-auto tracking-[0.3px]">TopologyPolyPointFilter</span>
            </div>
            <div className="flex h-[22px] items-center pl-[10px] pt-[4px] text-[16px] text-[#737373]">
              {RIBBON_TABS.map(([t, w]) => <span key={t} className={`shrink-0 ${w}`}>{t}</span>)}
              <div className="relative -mt-[5px] w-[82px] shrink-0 text-black">
                <svg width="96" height="25" viewBox="0 0 96 25" className="absolute -left-[13px] -top-[2px]">
                  <path d="M0 24C4 23.500 5 21 5 18V8Q5 1.500 12 1.500H81Q88 1.500 88 8V18C88 21 89 23.500 94 24Z" fill="#fdfdfd" stroke="#8a8a8a" />
                  <path d="M1 24H93" stroke="#e6e6e6" strokeWidth="1.600" />
                </svg>
                <span className="relative">Sandbox</span>
              </div>
              <span>SI</span>
            </div>
            <Ribbon />
            <CanvasToolbar />
            <div className="flex bg-white pl-px"><NodeCanvas /></div>
            <div className="flex h-[27px] items-center border-t-2 border-white bg-linear-to-r from-[#f0f0f0] to-[#fdfdfd] pl-[4px] text-[16px] text-black">
              <svg width="16" height="16" viewBox="0 0 16 16">
                <circle cx="8" cy="8" r="7.500" fill="#1d6fd6" stroke="#0b2a70" />
                <path d="M3 8A5 5 0 0 1 8 2.500V13.500A5 5 0 0 1 3 8Z" fill="#4fa0f0" />
                <rect x="6.500" y="2.500" width="3" height="7" rx="1.500" fill="#fff" stroke="#0a1e4a" strokeWidth=".8" />
                <circle cx="8" cy="12" r="1.500" fill="#fff" stroke="#0a1e4a" strokeWidth=".8" />
              </svg>
              <span className="ml-[4px] pt-px tracking-[0.33px]">Save successfully completed... (18 seconds ago)</span>
              <span className="ml-auto pt-px text-[16px] text-[#6e6e6e]">0.9.0056</span>
              <svg width="11" height="11" className="ml-[12px] mr-[3px] mt-2">
                {[[8, 0], [4, 4], [8, 4], [0, 8], [4, 8], [8, 8]].map(([x, y], i) => <rect key={i} x={x} y={y} width="2" height="2" fill="#9a9a9a" />)}
              </svg>
            </div>
          </div>
        </div>
      </div>
    </div>
  );
}

/* ------------------------------------------------------------------ */
/* Taskbar                                                             */
/* ------------------------------------------------------------------ */

function TaskButton({ lit, children }: { lit?: boolean; children: React.ReactNode }) {
  return (
    <div className={`mr-[3px] flex h-[55px] w-[75px] items-center justify-center rounded-[3px] border border-[#36485e] shadow-[inset_0_0_0_1px_rgba(255,255,255,.65)] ${lit ? "bg-linear-to-br from-[#e4ecf5] to-[#c3d4e8]" : "bg-linear-to-br from-[#c6d4e6] to-[#a9c0dd]"}`}>
      {children}
    </div>
  );
}

function Taskbar() {
  return (
    <div className="flex h-[56px] w-full items-stretch border-t border-[#3d4c60] bg-[#a7c0dc]">
      <div className="flex w-[86px] items-center justify-center bg-linear-to-r from-[#8b9cb3] via-[#8294ab] to-[#8294ab]">
        <svg width="52" height="52" viewBox="0 0 52 52" className="-ml-[6px]">
          <defs>
            <radialGradient id="orb" cx=".5" cy=".95" r=".9"><stop offset="0" stopColor="#35d8f8" /><stop offset=".35" stopColor="#1478b0" /><stop offset="1" stopColor="#123a66" /></radialGradient>
            <linearGradient id="orbTop" x1="0" y1="0" x2="0" y2="1"><stop offset="0" stopColor="#fff" stopOpacity=".6" /><stop offset="1" stopColor="#fff" stopOpacity=".15" /></linearGradient>
          </defs>
          <circle cx="26" cy="26" r="24.500" fill="url(#orb)" stroke="#a9d4ec" strokeWidth="1.200" />
          <path d="M2.500 25A23.500 23.500 0 0 1 49.500 25C40 19 30 30 22 29C14 28 8 24 2.500 25Z" fill="url(#orbTop)" />
          <path d="M17 11C20 8.500 23.500 9 26.500 11L23.800 23C20.500 21 17 21 13.500 23Z" fill="#f0642a" />
          <path d="M28.500 11.500C32 14 37 14 42 11.500L38.500 23.500C34 26.500 29.500 26 26 23.500Z" fill="#9cca3c" />
          <path d="M12.800 25.500C16 23 20 23.500 23.200 25.500L20.500 38C17 36 13 35.500 9.500 38Z" fill="#56a8e8" />
          <path d="M25.300 26C29 28.500 33.500 28.500 38 25.800L34.500 38C30 41 26 40.500 22.500 38.300Z" fill="#fcc832" />
        </svg>
      </div>
      <TaskButton>
        <svg width="50" height="50" viewBox="0 0 50 50" className="-mr-1">
          <path d="M4 5l2-2h14l2 3v6H4z" fill="#f0dc8c" stroke="#b09030" strokeWidth=".8" />
          <path d="M12 8h20l3 4h13v33H12z" fill="#f5e292" stroke="#c09c38" strokeWidth=".8" />
          <path d="M2 9h10l2 3h14l2 3h18v28q0 3-3 3H4q-2 0-2-3z" fill="#f7dc78" stroke="#c8a23c" strokeWidth=".8" />
          <rect x="8" y="4" width="12" height="4" fill="#fff" /><rect x="8" y="4" width="4" height="4" fill="#3a9a4a" />
          <rect x="18" y="7" width="13" height="4" fill="#fff" /><rect x="18" y="7" width="4" height="4" fill="#c83a2a" />
          <rect x="31" y="10" width="14" height="4" fill="#fff" /><rect x="31" y="10" width="4" height="4" fill="#3f6fb8" />
          <path d="M8 48V34q0-4 4-4h26q5 0 5 4v14h-7v-7q0-2-3-2H18q-3 0-3 2v7z" fill="#8fd0ee" stroke="#4698c4" strokeWidth=".9" opacity=".95" />
        </svg>
      </TaskButton>
      <TaskButton>
        <svg width="44" height="44" viewBox="0 0 44 44">
          <circle cx="22" cy="22" r="21.500" fill="#ffd21c" />
          <path d="M22 22L3.400 11.200A21.500 21.500 0 0 1 40.800 12H22Z" fill="#dc3326" />
          <path d="M22 .5A21.500 21.500 0 0 1 40.600 12H22L12.500 17Z" fill="#dc3326" />
          <path d="M3.400 11.200A21.500 21.500 0 0 0 20 43.400L30.500 27L13 26Z" fill="#45a649" />
          <circle cx="22" cy="22" r="10" fill="#fff" />
          <circle cx="22" cy="22" r="8" fill="#3a7bd0" />
        </svg>
      </TaskButton>
      <TaskButton>
        <svg width="48" height="26" viewBox="0 0 48 26" className="-ml-px mt-[3px]">
          <defs><linearGradient id="vs" x1="0" y1="0" x2="1" y2="0"><stop offset="0" stopColor="#7fc4ea" /><stop offset=".45" stopColor="#3a64c0" /><stop offset=".75" stopColor="#4b1c92" /><stop offset="1" stopColor="#6a36b4" /></linearGradient></defs>
          <path d="M24 14C19 8 15 6 12 6C7.500 6 4.500 9.500 4.500 13.500S7.500 21 12 21C21 21 25 4 35 4C40 4 44 8.500 44 13S40 22 35.500 22C31 22 27 18.500 24 14Z" fill="none" stroke="url(#vs)" strokeWidth="5" />
        </svg>
      </TaskButton>
      <TaskButton lit>
        <svg width="48" height="48" viewBox="0 0 48 48">
          <rect width="48" height="48" fill="#1f1f1f" />
          <path d="M10 0C12 5 6 10 2 14C6 20 10 20 14 22L30 39L36 46L41 42L47 36L45 18L40 26L32 20L25 6L18 0Z" fill="#ececec" />
          <path d="M8 1C7 6 5 8 3 10M26 12L12 20L16 32M16 24l6 8 8-1" stroke="#555" strokeWidth="1.500" fill="none" />
          <path d="M18 24l4 4 4-2-3-2z" fill="#c82a34" />
          <path d="M20 30l6 3-2-5z" fill="#222" />
          <circle cx="37" cy="39" r="1.600" fill="#222" />
          <rect x=".5" y=".5" width="47" height="47" fill="none" stroke="#000" />
        </svg>
      </TaskButton>
      <div className="flex-1" />
      <div className="flex w-[460px] items-center bg-linear-to-r from-[#a7c0dc] from-0% via-[#8193a9] via-7% to-[#8193a9] font-['Open_Sans'] text-white">
        <span className="ml-[37px] -mt-[6px] w-[31px] text-[17px] tracking-[-0.3px] text-[#e6ebf2]">DE</span>
        <svg width="24" height="20" viewBox="0 0 24 20" className="-mt-[7px]">
          <path d="M10 7C12 3 17 6 20 1" fill="none" stroke="#4e5664" />
          <rect x=".5" y="7" width="23" height="12" rx="1" fill="#cfcfcf" stroke="#666" />
          <path d="M3 10h18M3 13h18M3 16h3M8 16h8M18 16h3" stroke="#444" strokeWidth="1.500" strokeDasharray="2 1" />
        </svg>
        <svg width="12" height="8" className="ml-[21px]"><path d="M6 0l6 7H0z" fill="#eef2f7" stroke="#4c5b70" strokeWidth=".7" /></svg>
        <svg width="26" height="24" viewBox="0 0 26 24" className="ml-[23px]">
          <path d="M7 1l6 4-6 4-6-4zM19 1l6 4-6 4-6-4zM7 9l6 4-6 4-6-4zM19 9l6 4-6 4-6-4z" fill="#5fb4ee" />
          <path d="M13 5l6 4-6 4-6-4z" fill="#fff" />
          <path d="M5 16l8-3 7 3-7 6z" fill="#8ecbf5" />
          <circle cx="19.500" cy="17.500" r="5.500" fill="#2e9a34" stroke="#fff" strokeWidth=".6" />
          <path d="M16.500 17.500l2 2.500 4-4.500" stroke="#fff" strokeWidth="1.700" fill="none" />
        </svg>
        <svg width="16" height="24" viewBox="0 0 16 24" className="ml-[15px]">
          <path d="M5.500 1h5v3h4v19h-13V4h4z" fill="#fff" stroke="#333c48" /><rect x="4" y="6.500" width="8" height="9.500" fill="#4a5564" />
        </svg>
        <svg width="24" height="22" viewBox="0 0 24 22" className="ml-[16px]">
          <path d="M1 7h4l6-6.500v21L5 15H1z" fill="#fff" stroke="#4a5462" /><path d="M5.500 7v8" stroke="#4a5462" />
          <path d="M14 7c2 3 2 5 0 8M17 4.500c3.500 4 3.500 9 0 13M20 2.500c4.500 5 4.500 12 0 17" stroke="#eef2f6" strokeWidth="1.200" fill="none" />
        </svg>
        <svg width="25" height="24" viewBox="0 0 25 24" className="ml-[12px]">
          <path d="M2.500 1v22" stroke="#fff" strokeWidth="2" /><path d="M4 2c6-2 7 3 11 4s6 1 9-1c-1 5-3 8-6 9s-6-3-14-1z" fill="#fff" stroke="#4a5462" strokeWidth=".8" />
        </svg>
        <svg width="22" height="18" viewBox="0 0 22 18" className="ml-[13px] mt-1">
          <path d="M.5 14.500h3v3h-3zM4.800 11.500h3v6h-3z" fill="#fff" stroke="#3e4856" strokeWidth=".8" />
          <path d="M9.200 8.500h3v9h-3zM13.500 4.500h3v13h-3zM17.800 .5h3v17h-3z" fill="#8f9bab" stroke="#3e4856" strokeWidth=".9" />
        </svg>
        <div className="ml-[19px] flex w-[100px] flex-col items-center whitespace-nowrap pt-[4px] text-[17px] leading-[25.5px] tracking-[-0.1px] text-[#f4f7fa]">
          <span>13:01</span>
          <span>06.09.2013</span>
        </div>
        <div className="ml-auto h-full w-[15px] rounded-[2px] border border-[#a9b6c8] bg-linear-to-b from-[#8c9cb2] via-[#5a6a80] to-[#8494ab]" />
      </div>
    </div>
  );
}

export default function App() {
  return (
    <div className="relative flex h-[1200px] w-[1920px] flex-col overflow-hidden bg-[#a7c0dc]">
      <div className="flex h-[1144px]">
        <RhinoViewport />
        <GrasshopperWindow />
      </div>
      <Taskbar />
      <div className="pointer-events-none absolute left-[858px] top-[467px] font-['Open_Sans'] text-[17px] leading-[24px] text-[#6a6aa0]/8">Vollbild ausschneiden</div>
    </div>
  );
}
